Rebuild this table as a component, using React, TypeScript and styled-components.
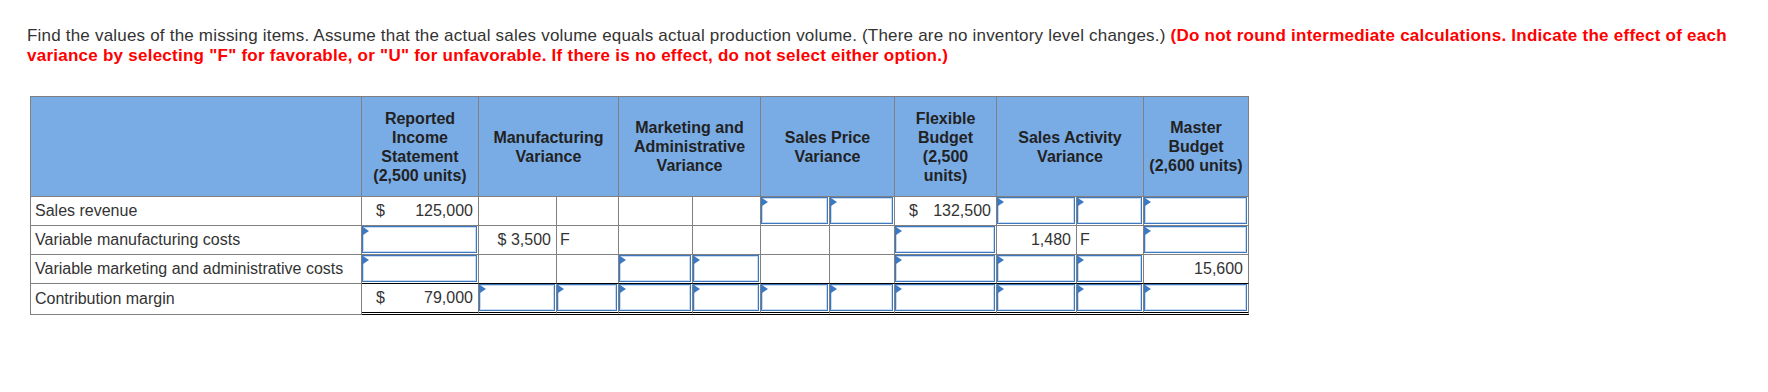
import * as React from 'react';
import styled, { createGlobalStyle } from 'styled-components';

type Cell =
  | { kind: 'empty' }
  | { kind: 'input' }
  | { kind: 'money'; value: string }
  | { kind: 'amount'; value: string }
  | { kind: 'flag'; value: string };

interface IRow {
  label: string;
  total?: boolean;
  cells: Cell[];
}

const E: Cell = { kind: 'empty' };
const I: Cell = { kind: 'input' };
const money = (value: string): Cell => ({ kind: 'money', value });
const amount = (value: string): Cell => ({ kind: 'amount', value });
const flag = (value: string): Cell => ({ kind: 'flag', value });

const widths = [332, 117, 78, 62, 74, 68, 69, 65, 102, 80, 67, 105];

const headers: { lines: string[]; span: number }[] = [
  { lines: ['Reported', 'Income', 'Statement', '(2,500 units)'], span: 1 },
  { lines: ['Manufacturing', 'Variance'], span: 2 },
  { lines: ['Marketing and', 'Administrative', 'Variance'], span: 2 },
  { lines: ['Sales Price', 'Variance'], span: 2 },
  { lines: ['Flexible', 'Budget', '(2,500', 'units)'], span: 1 },
  { lines: ['Sales Activity', 'Variance'], span: 2 },
  { lines: ['Master', 'Budget', '(2,600 units)'], span: 1 },
];

const rows: IRow[] = [
  { label: 'Sales revenue', cells: [money('125,000'), E, E, E, E, I, I, money('132,500'), I, I, I] },
  { label: 'Variable manufacturing costs', cells: [I, amount('$ 3,500'), flag('F'), E, E, E, E, I, amount('1,480'), flag('F'), I] },
  { label: 'Variable marketing and administrative costs', cells: [I, E, E, I, I, E, E, I, I, I, amount('15,600')] },
  { label: 'Contribution margin', total: true, cells: [money('79,000'), I, I, I, I, I, I, I, I, I, I] },
];

const renderCell = (cell: Cell) => {
  switch (cell.kind) {
    case 'input':
      return <Field><FieldInput type="text" /></Field>;
    case 'money':
      return <Money><span>$</span><span>{cell.value}</span></Money>;
    case 'amount':
      return <Amount>{cell.value}</Amount>;
    case 'flag':
      return <Flag>{cell.value}</Flag>;
    default:
      return null;
  }
};

export default () => (
  <Page>
    <GlobalStyle />
    <Prompt>
      Find the values of the missing items. Assume that the actual sales volume equals actual production volume. (There are no inventory level changes.){' '}
      <Warn>(Do not round intermediate calculations. Indicate the effect of each variance by selecting "F" for favorable, or "U" for unfavorable. If there is no effect, do not select either option.)</Warn>
    </Prompt>
    <Table>
      <colgroup>
        {widths.map((w, i) => <col key={i} style={{ width: w }} />)}
      </colgroup>
      <thead>
        <tr>
          <HeadCell $first />
          {headers.map(h => (
            <HeadCell key={h.lines.join(' ')} colSpan={h.span}>
              {h.lines.map((line, i) => (
                <React.Fragment key={i}>{i > 0 && <br />}{line}</React.Fragment>
              ))}
            </HeadCell>
          ))}
        </tr>
      </thead>
      <tbody>
        {rows.map((row, r) => {
          const next = rows[r + 1];
          return (
            <tr key={row.label}>
              <LabelCell>{row.label}</LabelCell>
              {row.cells.map((cell, c) => (
                <ValueCell
                  key={c}
                  $input={cell.kind === 'input'}
                  $rule={row.total ? 'double' : next && next.total ? 'single' : undefined}
                >
                  {renderCell(cell)}
                </ValueCell>
              ))}
            </tr>
          );
        })}
      </tbody>
    </Table>
  </Page>
);

const GlobalStyle = createGlobalStyle`
  * { box-sizing: border-box; }
  body {
    margin: 0;
    background: #fff;
    font-family: "Liberation Sans", Arial, sans-serif;
  }
`;

const Page = styled.div`
  padding: 26px 20px 40px 27px;
  color: #333;
`;

const Prompt = styled.p`
  margin: 0 0 30px;
  font-size: 17px;
  line-height: 20px;
  letter-spacing: 0.2px;
  color: #333;
`;

const Warn = styled.strong`
  color: #f00;
  font-weight: bold;
  letter-spacing: 0.25px;
`;

const Table = styled.table`
  margin-left: 3px;
  border-collapse: separate;
  border-spacing: 0;
  table-layout: fixed;
  width: 1219px;
  font-size: 16px;
`;

const HeadCell = styled.th<{ $first?: boolean }>`
  height: 101px;
  padding: 4px 5px;
  background: #79ace5;
  border-top: 1px solid #808080;
  border-right: 1px solid #808080;
  border-bottom: 1px solid #808080;
  ${({ $first }) => $first && 'border-left: 1px solid #808080;'}
  color: #222;
  font-weight: bold;
  line-height: 19px;
  text-align: center;
  vertical-align: middle;
`;

const LabelCell = styled.td`
  height: 29px;
  padding: 0 4px;
  border-left: 1px solid #808080;
  border-right: 1px solid #808080;
  border-bottom: 1px solid #808080;
  color: #333;
  white-space: nowrap;
  vertical-align: middle;
`;

const ValueCell = styled.td<{ $input?: boolean; $rule?: 'single' | 'double' }>`
  height: 29px;
  padding: ${({ $input }) => ($input ? '0 1px 1px 0' : '0')};
  border-right: 1px solid #808080;
  border-bottom: ${({ $rule }) =>
    $rule === 'double' ? '3px double #000' : $rule === 'single' ? '1px solid #000' : '1px solid #808080'};
  color: #333;
  vertical-align: middle;
`;

const Money = styled.div`
  display: flex;
  justify-content: space-between;
  padding: 0 5px 0 14px;
`;

const Amount = styled.div`
  padding: 0 5px;
  text-align: right;
`;

const Flag = styled.div`
  padding: 0 3px;
`;

const Field = styled.div`
  position: relative;
  height: 27px;
  border: 1px solid #3f77bc;
  box-shadow: inset 0 0 0 1px #c7dbf2;
  background: #fff;

  &::before {
    content: '';
    position: absolute;
    left: 0;
    top: 0;
    border-top: 4px solid transparent;
    border-bottom: 4px solid transparent;
    border-left: 6px solid #3b79c4;
  }
`;

const FieldInput = styled.input`
  display: block;
  width: 100%;
  height: 100%;
  border: 0;
  padding: 0 4px;
  background: transparent;
  font: inherit;
  color: #333;
  outline: none;
`;
